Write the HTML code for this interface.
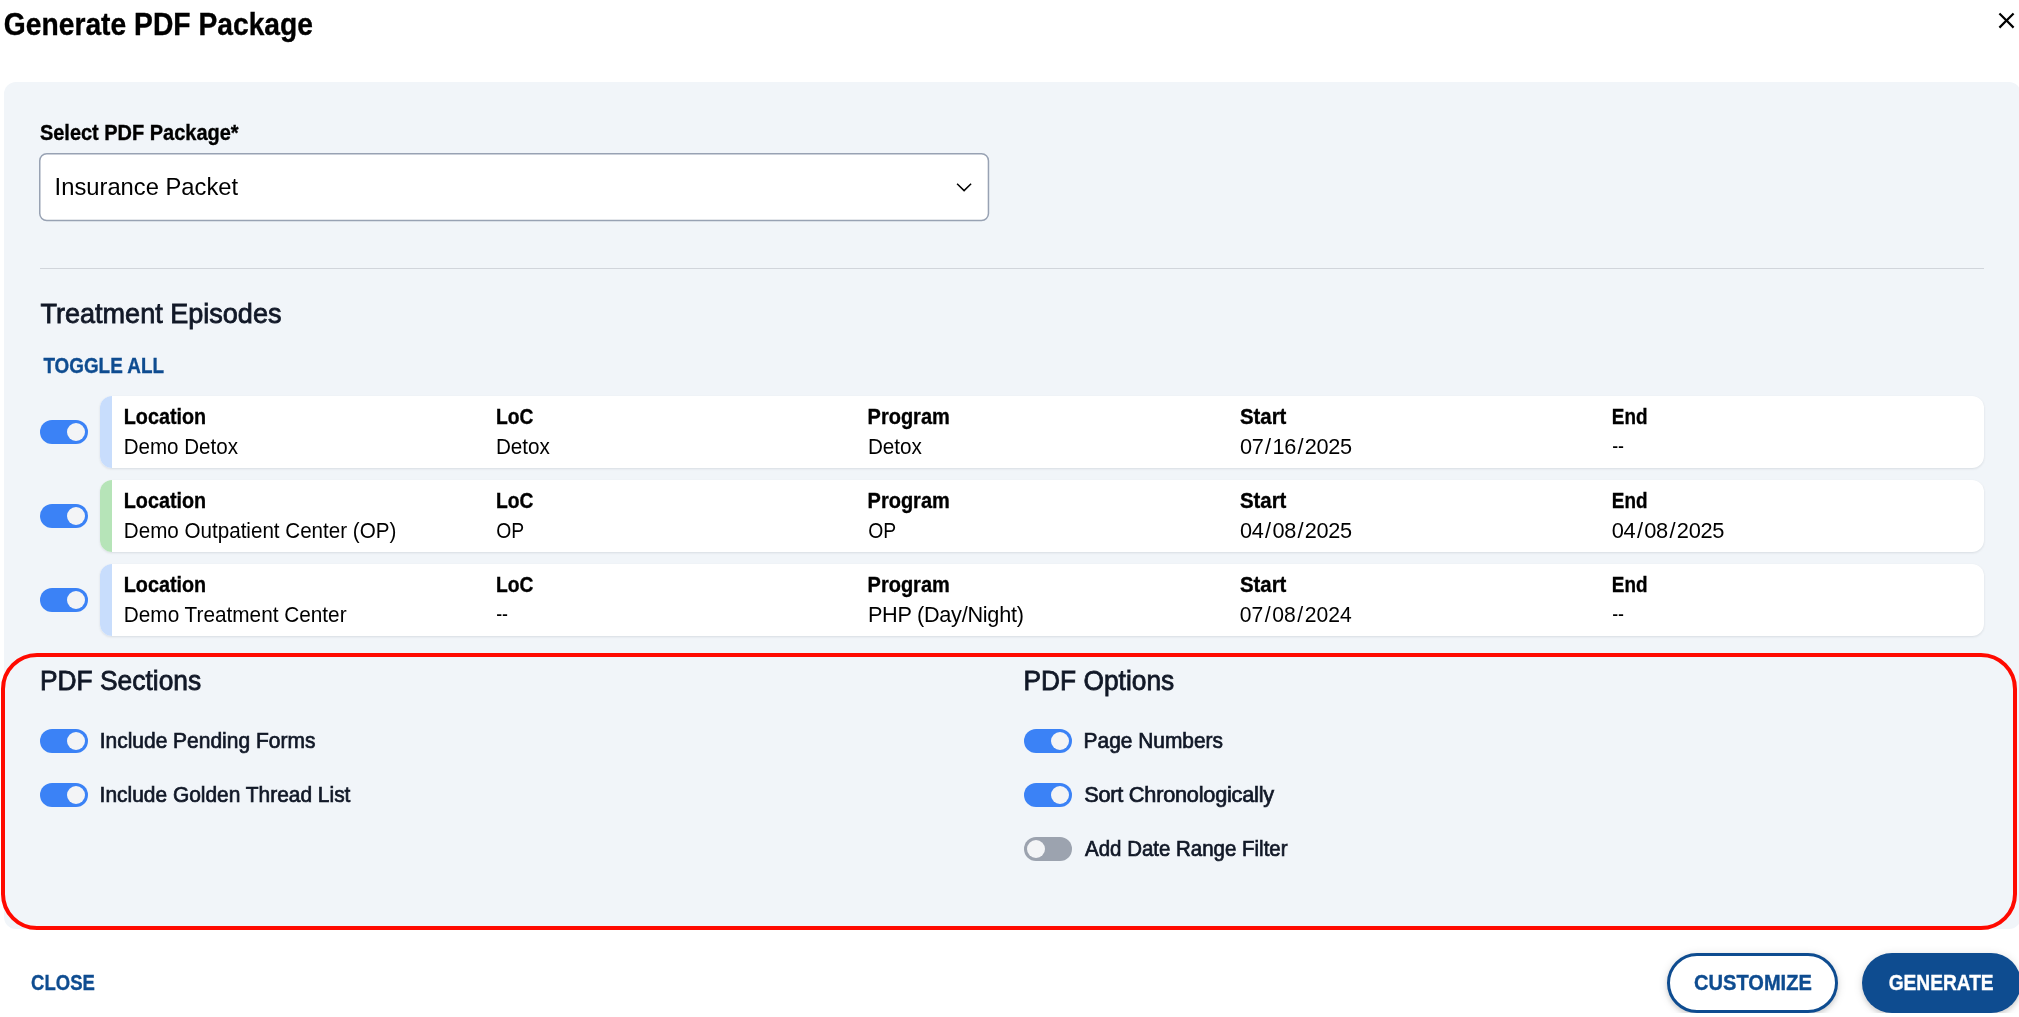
<!DOCTYPE html>
<html lang="en"><head><meta charset="utf-8"><title>Generate PDF Package</title>
<style>
html,body{margin:0;padding:0;background:#fff;}
body{width:2019px;height:1017px;position:relative;overflow:hidden;font-family:"Liberation Sans",Arial,sans-serif;}
.x{position:absolute;white-space:nowrap;line-height:1;}
.panel{position:absolute;left:4px;top:82px;width:2017px;height:847px;background:#f1f5f9;border-radius:12px;}
.card{position:absolute;left:100px;width:1884px;height:72px;background:#fff;border-radius:12px;box-sizing:border-box;box-shadow:0 1px 3px rgba(15,23,42,.07),0 1px 2px rgba(15,23,42,.04);overflow:hidden;}
.card b{position:absolute;left:0;top:0;width:12px;height:72px;display:block;}
.tg{position:absolute;width:48px;height:24px;border-radius:12px;}
.tg i{position:absolute;top:3px;width:18px;height:18px;border-radius:9px;background:#f3f4f6;display:block;}
.hl{position:absolute;left:1px;top:653px;width:2016px;height:277px;box-sizing:border-box;border:4px solid #ff0a00;border-radius:36px;}
.btn{position:absolute;top:23px;height:60px;border-radius:30px;box-sizing:border-box;box-shadow:0 3px 4.5px 0 rgba(0,0,0,.10),0 1.5px 10px 0 rgba(0,0,0,.13);}
.gl{position:absolute;left:0;top:0;width:2019px;height:1017px;will-change:transform;}
</style></head><body>
<div class="panel"></div>
<svg style="position:absolute;left:1993px;top:6.5px" width="27" height="27" viewBox="0 0 24 24"><path fill="#000" d="M19 6.41L17.59 5 12 10.59 6.41 5 5 6.41 10.59 12 5 17.59 6.41 19 12 13.41 17.59 19 19 17.59 13.41 12z"/></svg>
<svg style="position:absolute;left:37px;top:151px" width="956" height="74" viewBox="0 0 956 74"><rect x="2.75" y="2.7" width="948.7" height="66.8" rx="7" ry="7" fill="#fff" stroke="#98a2b3" stroke-width="1.5"/><path d="M920.1 32.7 L927.1 39.6 L934.1 32.7" fill="none" stroke="#000" stroke-width="1.5"/></svg>
<div style="position:absolute;left:40px;top:268px;width:1944px;height:1px;background:#d1d5db"></div>
<div class="tg" style="left:40px;top:420px;background:#3b82f6"><i style="left:27px"></i></div><div class="card" style="top:396px"><b style="background:#c8ddfc"></b></div>
<div class="tg" style="left:40px;top:504px;background:#3b82f6"><i style="left:27px"></i></div><div class="card" style="top:480px"><b style="background:#b6e4b8"></b></div>
<div class="tg" style="left:40px;top:588px;background:#3b82f6"><i style="left:27px"></i></div><div class="card" style="top:564px"><b style="background:#c8ddfc"></b></div>
<div class="tg" style="left:40px;top:729px;background:#3b82f6"><i style="left:27px"></i></div><div class="tg" style="left:40px;top:783px;background:#3b82f6"><i style="left:27px"></i></div><div class="tg" style="left:1024px;top:729px;background:#3b82f6"><i style="left:27px"></i></div><div class="tg" style="left:1024px;top:783px;background:#3b82f6"><i style="left:27px"></i></div><div class="tg" style="left:1024px;top:837px;background:#9ca3af"><i style="left:3px"></i></div>
<div class="hl"></div>
<div style="position:absolute;left:0;top:930px;width:2019px;height:83px;overflow:hidden">
<div class="btn" style="left:1667px;width:171px;border:3px solid #0e4c90;background:#fff"></div>
<div class="btn" style="left:1862px;width:158.5px;background:#0e4c90"></div>
</div>
<div class="gl">
<div class="x" id="title" style="left:3px;top:10px;font-size:30.7px;font-weight:700;color:#000;transform-origin:0 0;transform:translateX(0.77px) scaleX(0.9204);-webkit-text-stroke:0.35px #000;">Generate PDF Package</div>
<div class="x" id="lbl" style="left:39px;top:123px;font-size:21.4px;font-weight:700;color:#000;transform-origin:0 0;transform:translateX(0.92px) scaleX(0.9334);-webkit-text-stroke:0.35px #000;">Select PDF Package*</div>
<div class="x" id="sel" style="left:54px;top:175px;font-size:24.8px;font-weight:400;color:#000;transform-origin:0 0;transform:translateX(0.59px) scaleX(0.958);">Insurance Packet</div>
<div class="x" id="te" style="left:40px;top:300px;font-size:27.9px;font-weight:400;color:#111827;transform-origin:0 0;transform:translateX(0.44px) scaleX(0.9697);-webkit-text-stroke:0.8px #111827;">Treatment Episodes</div>
<div class="x" id="tog" style="left:43px;top:356px;font-size:21.4px;font-weight:700;color:#0e4c90;transform-origin:0 0;transform:translateX(0.42px) scaleX(0.8818);-webkit-text-stroke:0.35px #0e4c90;">TOGGLE ALL</div>
<div class="x" id="h00" style="left:123px;top:407px;font-size:21.4px;font-weight:700;color:#000;transform-origin:0 0;transform:translateX(0.79px) scaleX(0.9231);-webkit-text-stroke:0.35px #000;">Location</div>
<div class="x" id="v00" style="left:123px;top:436px;font-size:21.7px;font-weight:400;color:#000;transform-origin:0 0;transform:translateX(0.72px) scaleX(0.9478);">Demo Detox</div>
<div class="x" id="h01" style="left:496px;top:407px;font-size:21.4px;font-weight:700;color:#000;transform-origin:0 0;transform:translateX(0.04px) scaleX(0.8995);-webkit-text-stroke:0.35px #000;">LoC</div>
<div class="x" id="v01" style="left:495px;top:436px;font-size:21.7px;font-weight:400;color:#000;transform-origin:0 0;transform:translateX(0.89px) scaleX(0.954);">Detox</div>
<div class="x" id="h02" style="left:867px;top:407px;font-size:21.4px;font-weight:700;color:#000;transform-origin:0 0;transform:translateX(0.61px) scaleX(0.9339);-webkit-text-stroke:0.35px #000;">Program</div>
<div class="x" id="v02" style="left:867px;top:436px;font-size:21.7px;font-weight:400;color:#000;transform-origin:0 0;transform:translateX(0.88px) scaleX(0.954);">Detox</div>
<div class="x" id="h03" style="left:1239px;top:407px;font-size:21.4px;font-weight:700;color:#000;transform-origin:0 0;transform:translateX(0.94px) scaleX(0.9536);-webkit-text-stroke:0.35px #000;">Start</div>
<div class="x" id="v03" style="left:1239px;top:436px;font-size:21.7px;font-weight:400;color:#000;letter-spacing:-0.320px;transform-origin:0 0;transform:translateX(0.94px) scaleX(1.0014);">07<span style="margin:0 1.6px">/</span>16<span style="margin:0 1.6px">/</span>2025</div>
<div class="x" id="h04" style="left:1611px;top:407px;font-size:21.4px;font-weight:700;color:#000;transform-origin:0 0;transform:translateX(0.83px) scaleX(0.8822);-webkit-text-stroke:0.35px #000;">End</div>
<div class="x" id="v04" style="left:1612px;top:435px;font-size:21.7px;font-weight:400;color:#000;transform-origin:0 0;transform:translateX(0.13px) scaleX(0.8195);">--</div>
<div class="x" id="h10" style="left:123px;top:491px;font-size:21.4px;font-weight:700;color:#000;transform-origin:0 0;transform:translateX(0.79px) scaleX(0.9231);-webkit-text-stroke:0.35px #000;">Location</div>
<div class="x" id="v10" style="left:123px;top:520px;font-size:21.7px;font-weight:400;color:#000;transform-origin:0 0;transform:translateX(0.83px) scaleX(0.9499);">Demo Outpatient Center (OP)</div>
<div class="x" id="h11" style="left:496px;top:491px;font-size:21.4px;font-weight:700;color:#000;transform-origin:0 0;transform:translateX(0.04px) scaleX(0.8995);-webkit-text-stroke:0.35px #000;">LoC</div>
<div class="x" id="v11" style="left:496px;top:520px;font-size:21.7px;font-weight:400;color:#000;transform-origin:0 0;transform:translateX(0.33px) scaleX(0.8911);">OP</div>
<div class="x" id="h12" style="left:867px;top:491px;font-size:21.4px;font-weight:700;color:#000;transform-origin:0 0;transform:translateX(0.61px) scaleX(0.9339);-webkit-text-stroke:0.35px #000;">Program</div>
<div class="x" id="v12" style="left:868px;top:520px;font-size:21.7px;font-weight:400;color:#000;transform-origin:0 0;transform:translateX(0.33px) scaleX(0.8911);">OP</div>
<div class="x" id="h13" style="left:1239px;top:491px;font-size:21.4px;font-weight:700;color:#000;transform-origin:0 0;transform:translateX(0.94px) scaleX(0.9536);-webkit-text-stroke:0.35px #000;">Start</div>
<div class="x" id="v13" style="left:1239px;top:520px;font-size:21.7px;font-weight:400;color:#000;letter-spacing:-0.320px;transform-origin:0 0;transform:translateX(0.94px) scaleX(1.0014);">04<span style="margin:0 1.6px">/</span>08<span style="margin:0 1.6px">/</span>2025</div>
<div class="x" id="h14" style="left:1611px;top:491px;font-size:21.4px;font-weight:700;color:#000;transform-origin:0 0;transform:translateX(0.83px) scaleX(0.8822);-webkit-text-stroke:0.35px #000;">End</div>
<div class="x" id="v14" style="left:1611px;top:520px;font-size:21.7px;font-weight:400;color:#000;letter-spacing:-0.329px;transform-origin:0 0;transform:translateX(0.72px) scaleX(1.0064);">04<span style="margin:0 1.6px">/</span>08<span style="margin:0 1.6px">/</span>2025</div>
<div class="x" id="h20" style="left:123px;top:575px;font-size:21.4px;font-weight:700;color:#000;transform-origin:0 0;transform:translateX(0.79px) scaleX(0.9231);-webkit-text-stroke:0.35px #000;">Location</div>
<div class="x" id="v20" style="left:123px;top:604px;font-size:21.7px;font-weight:400;color:#000;transform-origin:0 0;transform:translateX(0.80px) scaleX(0.9576);">Demo Treatment Center</div>
<div class="x" id="h21" style="left:496px;top:575px;font-size:21.4px;font-weight:700;color:#000;transform-origin:0 0;transform:translateX(0.04px) scaleX(0.8995);-webkit-text-stroke:0.35px #000;">LoC</div>
<div class="x" id="v21" style="left:496px;top:603px;font-size:21.7px;font-weight:400;color:#000;transform-origin:0 0;transform:translateX(0.13px) scaleX(0.8195);">--</div>
<div class="x" id="h22" style="left:867px;top:575px;font-size:21.4px;font-weight:700;color:#000;transform-origin:0 0;transform:translateX(0.61px) scaleX(0.9339);-webkit-text-stroke:0.35px #000;">Program</div>
<div class="x" id="v22" style="left:867px;top:604px;font-size:21.7px;font-weight:400;color:#000;letter-spacing:-0.278px;transform-origin:0 0;transform:translateX(0.88px) scaleX(1.0);">PHP (Day/Night)</div>
<div class="x" id="h23" style="left:1239px;top:575px;font-size:21.4px;font-weight:700;color:#000;transform-origin:0 0;transform:translateX(0.94px) scaleX(0.9536);-webkit-text-stroke:0.35px #000;">Start</div>
<div class="x" id="v23" style="left:1239px;top:604px;font-size:21.7px;font-weight:400;color:#000;transform-origin:0 0;transform:translateX(0.81px) scaleX(0.9741);">07<span style="margin:0 1.6px">/</span>08<span style="margin:0 1.6px">/</span>2024</div>
<div class="x" id="h24" style="left:1611px;top:575px;font-size:21.4px;font-weight:700;color:#000;transform-origin:0 0;transform:translateX(0.83px) scaleX(0.8822);-webkit-text-stroke:0.35px #000;">End</div>
<div class="x" id="v24" style="left:1612px;top:603px;font-size:21.7px;font-weight:400;color:#000;transform-origin:0 0;transform:translateX(0.13px) scaleX(0.8195);">--</div>
<div class="x" id="ps" style="left:39px;top:667px;font-size:27.9px;font-weight:400;color:#111827;transform-origin:0 0;transform:translateX(0.92px) scaleX(0.9457);-webkit-text-stroke:0.8px #111827;">PDF Sections</div>
<div class="x" id="po" style="left:1023px;top:667px;font-size:27.9px;font-weight:400;color:#111827;transform-origin:0 0;transform:translateX(0.56px) scaleX(0.9434);-webkit-text-stroke:0.8px #111827;">PDF Options</div>
<div class="x" id="l1" style="left:99px;top:730px;font-size:21.7px;font-weight:400;color:#111827;transform-origin:0 0;transform:translateX(0.64px) scaleX(0.9674);-webkit-text-stroke:0.7px #111827;">Include Pending Forms</div>
<div class="x" id="l2" style="left:99px;top:784px;font-size:21.7px;font-weight:400;color:#111827;transform-origin:0 0;transform:translateX(0.61px) scaleX(0.9646);-webkit-text-stroke:0.7px #111827;">Include Golden Thread List</div>
<div class="x" id="r1" style="left:1083px;top:730px;font-size:21.7px;font-weight:400;color:#111827;transform-origin:0 0;transform:translateX(0.62px) scaleX(0.9636);-webkit-text-stroke:0.7px #111827;">Page Numbers</div>
<div class="x" id="r2" style="left:1084px;top:784px;font-size:21.7px;font-weight:400;color:#111827;letter-spacing:-0.230px;transform-origin:0 0;transform:translateX(0.15px) scaleX(1.0012);-webkit-text-stroke:0.7px #111827;">Sort Chronologically</div>
<div class="x" id="r3" style="left:1085px;top:838px;font-size:21.7px;font-weight:400;color:#111827;transform-origin:0 0;transform:translateX(0.06px) scaleX(0.9436);-webkit-text-stroke:0.7px #111827;">Add Date Range Filter</div>
<div class="x" id="close" style="left:31px;top:973px;font-size:21.4px;font-weight:700;color:#0e4c90;transform-origin:0 0;transform:translateX(0.11px) scaleX(0.8641);-webkit-text-stroke:0.35px #0e4c90;">CLOSE</div>
<div class="x" id="cust" style="left:1694px;top:973px;font-size:21.4px;font-weight:700;color:#0e4c90;transform-origin:0 0;transform:translateX(0.08px) scaleX(0.9375);-webkit-text-stroke:0.35px #0e4c90;">CUSTOMIZE</div>
<div class="x" id="gen" style="left:1888px;top:973px;font-size:21.4px;font-weight:700;color:#fff;transform-origin:0 0;transform:translateX(0.69px) scaleX(0.895);-webkit-text-stroke:0.35px #fff;">GENERATE</div>
</div>
</body></html>
